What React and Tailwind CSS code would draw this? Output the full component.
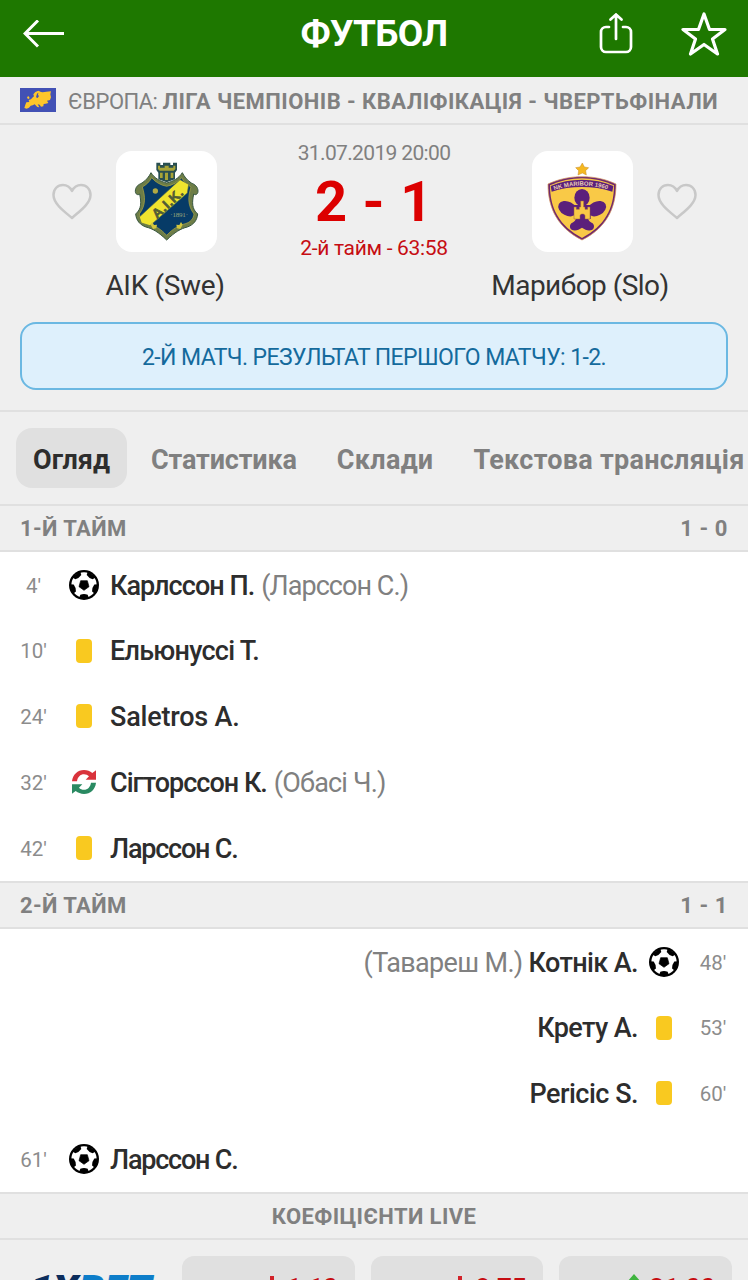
const FIRST_HALF = [
  { min: "4'", type: 'goal', name: 'Карлссон П.', extra: '(Ларссон С.)', track: 'tracking-[-0.95px]', extraTrack: 'tracking-[-0.95px]' },
  { min: "10'", type: 'card', name: 'Ельюнуссі Т.', track: 'tracking-[-0.75px]' },
  { min: "24'", type: 'card', name: 'Saletros A.', track: 'tracking-[-0.2px]' },
  { min: "32'", type: 'sub', name: 'Сігторссон К.', extra: '(Обасі Ч.)', track: 'tracking-[-1px]', extraTrack: 'tracking-[-0.8px]' },
  { min: "42'", type: 'card', name: 'Ларссон С.', track: 'tracking-[-1.2px]' },
]

const SECOND_HALF = [
  { min: "48'", type: 'goal', name: 'Котнік А.', extra: '(Тавареш М.)', away: true, track: 'tracking-[-0.6px]', extraTrack: 'tracking-[-0.65px]' },
  { min: "53'", type: 'card', name: 'Крету А.', away: true, track: 'tracking-[-0.6px]' },
  { min: "60'", type: 'card', name: 'Pericic S.', away: true, track: 'tracking-[-0.5px]' },
  { min: "61'", type: 'goal', name: 'Ларссон С.', track: 'tracking-[-1.2px]' },
]

const ODDS = [
  { value: '1.10', up: false },
  { value: '8.75', up: false },
  { value: '21.00', up: true },
]

function Ball() {
  return (
    <svg viewBox="-45 -45 90 90" className="h-[30px] w-[30px]">
      <circle r="45" fill="#000" />
      <circle r="38" fill="#fff" />
      <path d="M0 16L-15 5-10-13H10L15 5z" fill="#000" stroke="#000" strokeWidth="2" strokeLinejoin="round" />
      {[0, 72, 144, 216, 288].map(angle => (
        <path key={angle} transform={`rotate(${angle})`} d="M-15 40l4-11q11-4 22 0l4 11z" fill="#000" />
      ))}
    </svg>
  )
}

function Swap() {
  return (
    <svg viewBox="216 630 72 72" className="h-6 w-6">
      <path d="M216 664c2-20 17-34 36-34 10 0 18 4 25 9l11-8v28h-31l10-10c-4-4-9-6-15-6-11 0-19 8-21 21z" fill="#d9333c" />
      <path d="M288 668c-2 20-17 34-36 34-10 0-18-4-25-9l-11 8v-28h31l-10 10c4 4 9 6 15 6 11 0 19-8 21-21z" fill="#2a8a62" />
    </svg>
  )
}

function EventIcon({ type }) {
  if (type === 'goal') return <Ball />
  if (type === 'sub') return <Swap />
  return <span className="block h-6 w-4 rounded-[4px] bg-[#f9c920]" />
}

function EventRow({ event }) {
  return (
    <div className={`flex flex-1 items-center ${event.away ? 'flex-row-reverse' : ''}`}>
      <span className={`w-[67px] pt-[2px] text-center text-[20.5px] text-[#8c8c8c] ${event.away ? 'pr-[3px]' : ''}`}>{event.min}</span>
      <span className="flex w-[34px] justify-center">
        <EventIcon type={event.type} />
      </span>
      <div className={`flex px-[9px] pt-[2px] text-[27px] whitespace-nowrap ${event.away ? 'flex-row-reverse gap-1.5' : 'gap-[7px]'}`}>
        <span className={`font-medium text-[#2d2d2d] ${event.track}`}>{event.name}</span>
        {event.extra && <span className={`text-[#808080] ${event.extraTrack}`}>{event.extra}</span>}
      </div>
    </div>
  )
}

function HalfHeader({ title, score }) {
  return (
    <div className="flex h-12 shrink-0 items-center justify-between border-y-2 border-[#e0e0e0] px-5 text-[22px] font-bold text-[#808080]">
      <span className="tracking-[0.4px]">{title}</span>
      <span className="tracking-[0.6px]">{score}</span>
    </div>
  )
}

function Heart() {
  return (
    <svg viewBox="0 0 40 37" className="h-[37px] w-10" fill="none" stroke="#c8c8c8" strokeWidth="2.5">
      <path d="M20 35C13 29 1.500 21 1.500 12 1.500 6 5.500 2 11 2c4 0 7 2 9 6 2-4 5-6 9-6 5.500 0 9.500 4 9.500 10 0 9-12 17-18.500 23z" strokeLinejoin="round" />
    </svg>
  )
}

function AikCrest() {
  return (
    <svg viewBox="48 33 303 303" className="h-full w-full">
      <path d="M169 68h12v7h8v-7h22v7h8v-7h12v22l-6 8v20l-25 9-25-9V98l-6-8z" fill="#294f51" />
      <path d="M174 77h6v6h14v-6h12v6h14v-6h6v10l-5 5h-42l-5-5zM180 98h8v16h-8zM195 98h9v22h-9zM212 98h8v16h-8z" fill="#a8a437" />
      <path d="M200 129c20-5 36-14 47-31 5 10 13 22 27 31 12 5 20 12 20 25 0 8-7 13-13 8-5 26-6 44 12 60-2 21-14 33-31 39-20 5-37 15-62 39-25-24-42-34-62-39-17-6-29-18-31-39 18-16 17-34 12-60-6 5-13 0-13-8 0-13 8-20 20-25 14-9 22-21 27-31 11 17 27 26 47 31z" fill="#6d7d47" stroke="#36553f" strokeWidth="3" />
      <path d="M200 139c19-4 33-12 45-26 7 13 16 21 28 28-9 28-11 55 9 81-2 15-11 25-26 29-22 6-38 16-56 35-18-19-34-29-56-35-15-4-24-14-26-29 20-26 18-53 9-81 12-7 21-15 28-28 12 14 26 22 45 26z" fill="#073b67" stroke="#b8ac3d" strokeWidth="2" />
      <path d="M118 231L240 119l26 14-4 26-112 98-26-8z" fill="#efe42e" stroke="#52684a" strokeWidth="2" />
      <text transform="translate(171 238) rotate(-43)" fontFamily="Liberation Sans" fontWeight="700" fontSize="40" textLength="112" fill="#515c36" stroke="#515c36" strokeWidth="2">A.I.K.</text>
      <text x="211" y="232" fontFamily="Liberation Serif" fontSize="21" textLength="53" fill="#9ba67a">·1891·</text>
      <circle cx="166" cy="153" r="8" fill="#b1a943" />
      <path d="M152 254l5-8 5 9 9-1-2 11-10 2M248 254l-5-8-5 9-9-1 2 11 10 2" fill="#d2c63e" />
    </svg>
  )
}

function MariborCrest() {
  return (
    <svg viewBox="36 33 303 303" className="h-full w-full">
      <path d="M187 69l6 12 13 2-9 9 2 13-12-6-13 6 2-13-9-9 13-2z" fill="#f5b820" stroke="#c78a27" strokeWidth="1.500" />
      <path d="M84 132c33-15 65-22 102-22s69 7 102 22c0 74-30 132-102 168C114 264 84 206 84 132z" fill="#6d276f" stroke="#d49152" strokeWidth="2" />
      <path d="M90 136c31-14 62-21 96-21s65 7 96 21c0 70-28 122-96 158C118 258 90 206 90 136z" fill="#f9c947" />
      <path d="M92 138c29-13 61-19 94-19s65 6 94 19l-3 17c-31-10-59-14-91-14s-60 4-91 14z" fill="#5b207b" />
      <path id="maribor-arc" d="M103 151Q186 122 270 151" fill="none" />
      <text fontFamily="Liberation Sans" fontWeight="700" fontSize="18" fill="#e9cbb5">
        <textPath href="#maribor-arc" textLength="162">NK MARIBOR 1960</textPath>
      </text>
      <g fill="#5b207b">
        <ellipse cx="186" cy="173" rx="23" ry="26" />
        <ellipse cx="143" cy="206" rx="30" ry="21" transform="rotate(28 143 206)" />
        <ellipse cx="230" cy="206" rx="30" ry="21" transform="rotate(-28 230 206)" />
        <path d="M162 195h50v42h-50z" />
        <path d="M168 234h36c1 7 4 11 11 14 9 4 9 16 2 21-10 5-21 1-31-6-10 7-21 11-31 6-7-5-7-17 2-21 7-3 10-7 11-14z" />
      </g>
      <path d="M162 237v-36h7v7h9v-7h4v-18h9v18h4v7h8v-7h7v36h-15v-9c0-8-15-8-15 0v9z" fill="#f9c947" stroke="#9b623b" strokeWidth="1.500" />
    </svg>
  )
}

function Team({ name, children, away }) {
  return (
    <div className="flex w-[330px] shrink-0 flex-col items-center">
      <div className={`flex items-center gap-6 ${away ? 'ml-[63px] flex-row-reverse' : 'mr-[61px]'}`}>
        <Heart />
        <div className="h-[101px] w-[101px] rounded-2xl bg-white">{children}</div>
      </div>
      <p className={`mt-[14px] text-[28px] leading-10 text-[#333] ${away ? 'pr-[6px] tracking-[-0.55px]' : 'tracking-[-0.35px]'}`}>{name}</p>
    </div>
  )
}

function OddButton({ value, up }) {
  return (
    <div className="flex h-15 flex-1 items-center justify-end gap-2 rounded-xl bg-[#e0e0e0] pt-[5px] pr-[17px] text-[26px] font-bold text-[#c60d12]">
      <svg viewBox="0 0 14 24" className="mb-[5px] h-6 w-[14px]" fill={up ? '#3fb43f' : '#d2232a'}>
        {up ? <path d="M7 0l7 8H9v16H5V8H0z" /> : <path d="M5 2h4v14h5l-7 8-7-8h5z" />}
      </svg>
      <span className="tracking-[-0.3px]">{value}</span>
    </div>
  )
}

export default function App() {
  return (
    <div className="flex h-[1280px] w-[748px] flex-col overflow-hidden bg-[#efefef] font-['Roboto',sans-serif]">
      {/* Top bar */}
      <header className="grid h-[77px] shrink-0 grid-cols-3 items-center bg-[#1e7800] pb-[10px]">
        <svg viewBox="0 0 42 28" className="ml-[23px] h-7 w-[42px]" fill="none" stroke="#fff" strokeWidth="3">
          <path d="M41 13.500H2M15 .5l-13 13 13 13" />
        </svg>
        <h1 className="text-center text-[37px] leading-[44px] font-bold tracking-[-0.7px] text-white">ФУТБОЛ</h1>
        <div className="flex items-center justify-end gap-[48px] pr-[21px]">
          <svg viewBox="0 0 34 42" className="h-[42px] w-[34px]" fill="none" stroke="#fff" strokeWidth="2.700" strokeLinecap="round">
            <path d="M10 14H7a5 5 0 0 0-5 5v15a5 5 0 0 0 5 5h20a5 5 0 0 0 5-5V19a5 5 0 0 0-5-5h-3M17 26V1.500M11.500 6.500l5.500-5 5.500 5" />
          </svg>
          <svg viewBox="0 0 46 44" className="h-11 w-[46px]" fill="none" stroke="#fff" strokeWidth="3.200" strokeLinejoin="round">
            <path d="M23 2l5.500 15.500H44L31.500 27 36.500 42 23 32.500 9.500 42l5-15L2 17.500h15.500z" />
          </svg>
        </div>
      </header>

      {/* Competition */}
      <div className="flex h-12 shrink-0 items-center border-b-2 border-[#e0e0e0] px-5 text-[22px] whitespace-nowrap text-[#808080]">
        <svg viewBox="60 267 108 72" className="mr-3 h-6 w-9">
          <path d="M60 267h108v72H60z" fill="#4251b5" />
          <path d="M76 317l3-7 9-1-2-6 7-2 4-5 5-4-2-6 6-7 9-4 8 4 5 1 11-2 14-1-2 9 2 9-3 8-9 2 4 7-8 2-6 1-1 7-7 1-4-6-6-1 5 9-6-1-8-8-6 3-6 1-5 6-7 3-7-2z" fill="#fec62b" />
          <path d="M111 284l4-3-1 7 3 3-4 6-5-2z" fill="#4251b5" />
          <path d="M81 295l4-4 4 6-5 4z" fill="#fec62b" />
        </svg>
        <span className="pt-[2px] tracking-[-0.5px]">ЄВРОПА:</span>
        <b className="ml-[5px] pt-[2px] tracking-[0.45px]">ЛІГА ЧЕМПІОНІВ - КВАЛІФІКАЦІЯ - ЧВЕРТЬФІНАЛИ</b>
      </div>

      {/* Match summary */}
      <section className="h-[287px] shrink-0 border-b-2 border-[#e0e0e0] px-5 pt-[13px]">
        <div className="-mx-5 flex h-[184px] justify-between">
          <div className="w-[290px] pt-[13px]">
            <Team name="AIK (Swe)">
              <AikCrest />
            </Team>
          </div>
          <div className="flex w-[168px] shrink-0 flex-col items-center pt-px whitespace-nowrap">
            <span className="text-[21px] leading-7 tracking-[-0.65px] text-[#808080]">31.07.2019 20:00</span>
            <span className="mt-[5px] text-[56px] leading-[60px] font-bold tracking-[0.8px] text-[#dc0000]">2 - 1</span>
            <span className="mt-[2px] text-[21px] leading-7 tracking-[-0.3px] text-[#c60d12]">2-й тайм - 63:58</span>
          </div>
          <div className="flex w-[290px] justify-end pt-[13px]">
            <Team name="Марибор (Slo)" away>
              <MariborCrest />
            </Team>
          </div>
        </div>
        <div className="flex h-[68px] items-center justify-center rounded-2xl border-2 border-[#6bb8e2] bg-[#def0fc] pt-1 text-[23px] tracking-[-0.58px] text-[#146a9c]">
          2-Й МАТЧ. РЕЗУЛЬТАТ ПЕРШОГО МАТЧУ: 1-2.
        </div>
      </section>

      {/* Tabs */}
      <nav className="flex h-[92px] shrink-0 items-center text-[27px] font-bold whitespace-nowrap text-[#808080]">
        <span className="ml-4 flex h-15 w-[111px] items-center justify-center rounded-2xl bg-[#e0e0e0] pt-1 text-[#2d2d2d]">Огляд</span>
        <span className="ml-6 pt-1 tracking-[-0.15px]">Статистика</span>
        <span className="ml-10 pt-1 tracking-[0.3px]">Склади</span>
        <span className="ml-10 pt-1 tracking-[0.27px]">Текстова трансляція</span>
      </nav>

      <HalfHeader title="1-Й ТАЙМ" score="1 - 0" />
      <div className="flex h-[329px] shrink-0 flex-col bg-white">
        {FIRST_HALF.map(event => <EventRow key={event.min} event={event} />)}
      </div>

      <HalfHeader title="2-Й ТАЙМ" score="1 - 1" />
      <div className="flex h-[263px] shrink-0 flex-col bg-white">
        {SECOND_HALF.map(event => <EventRow key={event.min} event={event} />)}
      </div>

      {/* Live odds */}
      <div className="flex h-12 shrink-0 items-center justify-center border-y-2 border-[#e0e0e0] text-[22px] font-bold text-[#808080]">
        <span className="tracking-[0.4px]">КОЕФІЦІЄНТИ LIVE</span>
      </div>
      <div className="flex shrink-0 gap-4 px-4 pt-4">
        <div className="flex w-[150px] justify-center pt-[14px] text-[41px] leading-10 font-black italic">
          <span className="text-[#0c2d5c]">1X</span>
          <span className="text-[#0d7dc9]">BET</span>
        </div>
        {ODDS.map(odd => <OddButton key={odd.value} {...odd} />)}
      </div>
    </div>
  )
}
